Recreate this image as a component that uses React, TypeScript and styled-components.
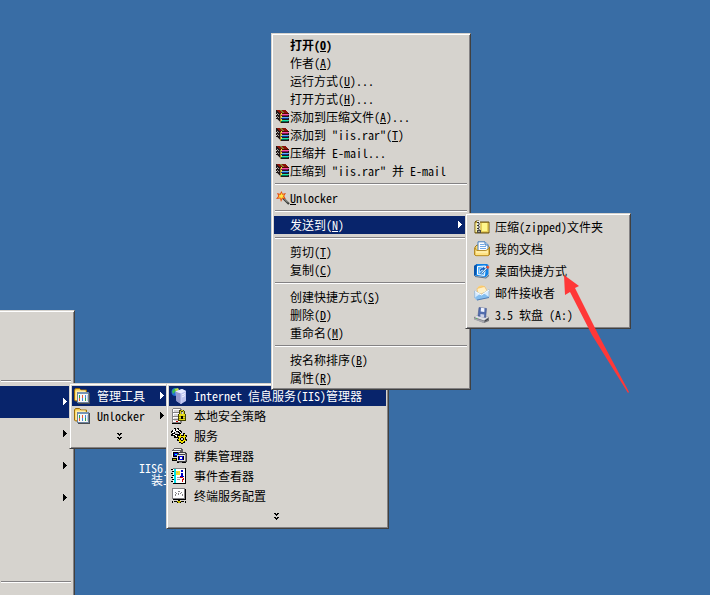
import React from "react";
import styled, { createGlobalStyle, css } from "styled-components";

const face = "#d6d3ce";
const navy = "#08246b";

const GlobalStyle = createGlobalStyle`
  html, body, #root { height: 100%; }
  body { margin: 0; background: #396da5; }
`;

const Desktop = styled.main`
  position: relative;
  min-height: 100%;
  overflow: hidden;
  background: #396da5;
  color: #000;
  font: 12px/18px "Noto Sans CJK SC", "Liberation Sans", sans-serif;
`;

const Menu = styled.ul<{ $x: number; $y: number; $w: number; $z: number }>`
  position: absolute;
  left: ${(p) => p.$x}px;
  top: ${(p) => p.$y}px;
  z-index: ${(p) => p.$z};
  box-sizing: border-box;
  width: ${(p) => p.$w}px;
  margin: 0;
  padding: 2px;
  list-style: none;
  background: ${face};
  border: 1px solid;
  border-color: ${face} #404040 #404040 ${face};
  box-shadow: inset 1px 1px #fff, inset -1px -1px #848284;
`;

const StartMenu = styled(Menu)`
  border-left: 0;
  padding-left: 0;
  box-shadow: inset 0 1px #fff, inset -1px 0 #848284;
`;

type Kind = "context" | "send" | "programs" | "start";

const kinds = {
  context: css`height: 18px; padding: 0 5px 0 2px; --icon: 14px; --gap: 0;`,
  send: css`height: 22px; padding: 0 5px 0 6px; --icon: 16px; --gap: 5px;`,
  programs: css`height: 20px; padding: 0 4px 0 2px; --icon: 16px; --gap: 7px;`,
  start: css`height: 32px; padding: 0 4px 0 0; --icon: 0; --gap: 0;`,
};

const ItemButton = styled.button<{ $kind: Kind; $active?: boolean; $bold?: boolean }>`
  display: flex;
  align-items: center;
  box-sizing: border-box;
  width: 100%;
  margin: 0;
  border: 0;
  font: inherit;
  text-align: left;
  color: ${(p) => (p.$active ? "#fff" : "#000")};
  background: ${(p) => (p.$active ? navy : "transparent")};
  font-weight: ${(p) => (p.$bold ? 700 : 400)};
  ${(p) => kinds[p.$kind]}
`;

const IconSlot = styled.span`
  display: flex;
  flex: none;
  width: var(--icon);
  margin-right: var(--gap);
`;

const Text = styled.span`
  flex: 1;
  white-space: pre;
`;

const Latin = styled.span`
  font-feature-settings: "hwid" 1;
`;

const Hot = styled(Latin)`
  text-decoration: underline;
  text-underline-offset: 1px;
`;

const Separator = styled.li`
  height: 1px;
  margin: 3px 1px 4px;
  background: #848284;
  border-bottom: 1px solid #fff;
`;

const Center = styled.span`
  display: flex;
  flex: 1;
  justify-content: center;
`;

const Shortcut = styled.div`
  position: absolute;
  left: 139px;
  top: 444px;
  display: flex;
  flex-direction: column;
  align-items: flex-start;
  color: #fff;
  line-height: 12px;
`;

const ShortcutPicture = styled.svg`
  align-self: flex-end;
  margin-bottom: 2px;
`;

const SecondLine = styled.span`
  padding-left: 12px;
`;

const Pointer = styled.svg`
  position: absolute;
  left: 562px;
  top: 274px;
  z-index: 9;
  pointer-events: none;
`;

/* "&" marks the access key that follows it. */
function Label({ text }: { text: string }) {
  const parts = text.match(/[\u4e00-\u9fff]+|&.|[^&\u4e00-\u9fff]+/g) || [];
  return (
    <>
      {parts.map((part, i) =>
        part[0] === "&" ? (
          <Hot key={i}>{part[1]}</Hot>
        ) : /[\u4e00-\u9fff]/.test(part) ? (
          <span key={i}>{part}</span>
        ) : (
          <Latin key={i}>{part}</Latin>
        )
      )}
    </>
  );
}

const Arrow = () => (
  <svg width="6" height="8" viewBox="0 0 6 8" shapeRendering="crispEdges" aria-hidden="true">
    <path d="M1 0h1v1h1v1h1v1h1v1h-1v1h-1v1h-1v1H1z" fill="currentColor" />
  </svg>
);

const Chevron = () => (
  <svg width="5" height="8" viewBox="0 0 5 8" shapeRendering="crispEdges" aria-hidden="true">
    <path
      d="M0 1h2v1h1v-1h2v1h-1v1h-1v1h-1v-1h-1v-1H0zM0 5h2v1h1v-1h2v1h-1v1h-1v1h-1v-1h-1v-1H0z"
      fill="#000"
    />
  </svg>
);

const Pixels = ({ size = 16, children }: { size?: number; children: React.ReactNode }) => (
  <svg width={size} height={size} viewBox={`0 0 ${size} ${size}`} shapeRendering="crispEdges" aria-hidden="true">
    {children}
  </svg>
);

const Smooth = ({ children }: { children: React.ReactNode }) => (
  <svg width="16" height="16" viewBox="0 0 16 16" aria-hidden="true">
    {children}
  </svg>
);

const RarIcon = () => (
  <Pixels size={14}>
    <path d="M0 0h10v1h1v1h1v1h1v10H4v-1H3v-1H2v-1H1V9H0V8h1V7H0V5h1V4H0z" fill="#211818" />
    <path d="M1 0h9v1h1v1h1v1H3V2H2V1H1z" fill="#8c1408" />
    <path d="M3 3h9v1H4z" fill="#520800" />
    <path d="M1 3h1v1H1zM2 4h1v1H2zM1 6h1v1H1zM2 7h1v1H2zM1 9h1v1H1zM2 10h1v1H2zM3 11h1v1H3z" fill="#a5a29c" />
    <path d="M5 4h8v1H5z" fill="#f751a5" />
    <path d="M5 5h7v1H5z" fill="#8c1452" />
    <path d="M5 7h8v1H5z" fill="#5ab2f7" />
    <path d="M5 8h7v1H5z" fill="#10389c" />
    <path d="M5 10h8v1H5z" fill="#21e3a5" />
    <path d="M5 11h7v1H5z" fill="#007152" />
    <path d="M4 0h2v1h1v1h1v1H6V2H5V1H4z" fill="#848231" />
    <path d="M4 4h1v9H4z" fill="#a58a29" />
    <path d="M5 3h1v2H5zM5 6h1v2H5zM5 9h1v2H5z" fill="#efdf42" />
  </Pixels>
);

const WandIcon = () => (
  <svg width="14" height="14" viewBox="0 0 14 14" aria-hidden="true">
    <path d="M7 7l6 6" stroke="#393c39" strokeWidth="2.200" />
    <path d="M8 7.500l4 4" stroke="#b5b6ad" />
    <path d="M5.500 0l1.200 2.800L10 2 8.200 5l1.600 3-3.200-.5L5 11 4 7.500 0 8l2.300-3L1 2l3 .8z" fill="#e74d10" />
    <path d="M5.400 1.800l.8 2 2-.4L7 5.200l1 1.700-2-.4-.9 2-.7-2-2.400.3 1.500-1.800-.8-1.500 1.900.4z" fill="#ffe342" />
  </svg>
);

const ProgramFolder = () => (
  <Smooth>
    <path d="M.5 2l1-1.500h4L7 2h5.500v3H5v8H1.500l-1-1z" fill="#f7ca42" stroke="#9c6d08" />
    <path d="M1.500 2.500h10V4h-7v8H1.500z" fill="#ffeda5" />
    <path d="M4 5h12v11H4z" fill="#4a4d52" />
    <path d="M3 4h12v11H3z" fill="#6b829c" />
    <path d="M4 6h10v8H4z" fill="#f7f7f7" />
    <path d="M4 4.500h10v1H4z" fill="#84a6ce" />
    <path d="M5 7h1v3H5zM11 10h1v3h-1z" fill="#29a64a" />
    <path d="M8 7h1v3H8zM5 10h1v3H5z" fill="#e75931" />
    <path d="M11 7h1v3h-1zM8 10h1v3H8z" fill="#3986de" />
    <path d="M13 7h1v6h-1z" fill="#c6cbd6" />
  </Smooth>
);

const ZipIcon = () => (
  <Smooth>
    <path d="M1 3l1-1h3l1 1h9v11H1z" fill="#c6a642" stroke="#6b5510" />
    <path d="M1.500 4h5v9h-5z" fill="#f7ef9c" />
    <path d="M7 4h7.500v9H7z" fill="#e7cf5a" />
    <path d="M8 4h5v8H8z" fill="#fff78c" />
    <path d="M3 2h3v12H3z" fill="#e7e7e7" />
    <path d="M3 3.500h2M4 5h2M3 6.500h2M4 8h2M3 9.500h2M4 11h2" stroke="#31302a" />
    <path d="M3 11h4v3H3z" fill="#4a4942" />
    <path d="M4.500 12h1v1h-1z" fill="#fff" />
  </Smooth>
);

const DocumentsIcon = () => (
  <Smooth>
    <path d="M1 6l2-2h10l2.500 2v7.500l-1.500 1H2l-1.500-1z" fill="#f7d773" stroke="#a57918" />
    <path d="M4 .8h7l3 3V10H4z" fill="#fff" stroke="#427dbd" />
    <path d="M11 1v3h3" fill="#c6dff7" stroke="#427dbd" />
    <path d="M6 3.500h4M6 5.500h6M6 7.500h6" stroke="#73aae7" />
    <path d="M.8 7l2 2.500h9L15 7.500V14l-1.500.7H2L.8 14z" fill="#ffe384" stroke="#ad7d10" strokeWidth=".8" />
    <path d="M2 11h12" stroke="#fff7c6" />
  </Smooth>
);

const DesktopIcon = () => (
  <Smooth>
    <path d="M3 1h10l1.500 1v9L12 14l-9-1L0 12V3z" fill="#1082e7" />
    <path d="M0 3l3-2-1 11-2 1z" fill="#0855ad" />
    <path d="M1 13l11 1.500 3-3V13l-3 2.500L1 14z" fill="#5a718c" />
    <path d="M3.500 3.500l8-.5-1 9.500-7-1z" fill="#5ab6ff" stroke="#fff" />
    <path d="M5.500 9.500V7q.5-2.500 3.500-2.500V3L12 6 9 8.500V7Q7 7 5.500 9.500z" fill="#1061c6" stroke="#fff" strokeWidth=".6" />
    <path d="M6.500 10.500l5.500-6L13.500 5.500 8 11z" fill="#d6efff" stroke="#104a94" strokeWidth=".6" />
    <path d="M12 4l1.500-1.500L15.500 4 14 6z" fill="#f75129" />
  </Smooth>
);

const MailIcon = () => (
  <Smooth>
    <circle cx="7.500" cy="4.500" r="4" fill="#ffcf73" />
    <path d="M3 3.500l7.500-2 3 5L4 10z" fill="#fff0c6" stroke="#efb652" strokeWidth=".6" />
    <path d="M.7 6L7.500 9.500 15 4.500v7.500L3 15 .7 13z" fill="#d6ebff" stroke="#84aed6" strokeWidth=".7" />
    <path d="M1 12.500L6 9l1.500 1 2.500-1.500 5 3.500L3 15z" fill="#84beef" />
    <path d="M1 6.500l6.500 3.500L15 5" fill="none" stroke="#fff" />
    <path d="M3 15l12-2.500" stroke="#527db5" />
  </Smooth>
);

const FloppyIcon = () => (
  <Smooth>
    <path d="M0 10l4-2 11 2v4l-5 2-10-4z" fill="#73757b" />
    <path d="M0 10l4-2 11 2-5 3.500z" fill="#dedfe3" />
    <path d="M0 11l10 3v2L0 12.500z" fill="#a5a6ad" />
    <path d="M5 .5l7.500 1-.8 9-7.700-1.500z" fill="#526dad" stroke="#394a84" strokeWidth=".5" />
    <path d="M7 .8l3.500.5L10.300 5 6.700 4.500z" fill="#eff3ff" />
    <path d="M6.500 7l3.700.6-.2 3-3.700-.8z" fill="#ced3e7" />
    <path d="M11 14l3-2" stroke="#393c42" />
    <path d="M2 11.500h1" stroke="#52c752" />
  </Smooth>
);

const IisIcon = () => (
  <Smooth>
    <circle cx="4.500" cy="4" r="4" fill="#2170d6" />
    <path d="M1 3l3-3 2 2-2 2-2 2z" fill="#39be52" />
    <path d="M4 1l3-1 1 2-3 2z" fill="#c6db42" />
    <path d="M4.500 3.500L11 1l4 2v10l-5 3-4.500-3z" fill="#bdc3ef" />
    <path d="M4.500 3.500l5.500 2V16l-4.500-3z" fill="#949ace" />
    <path d="M4.500 3.500L11 1l4 2-5 2.500z" fill="#e7ebff" />
    <path d="M11 7l3-1.500M11 9l3-1.500" stroke="#f7f7ff" />
    <path d="M10 5.500V16" stroke="#d6dbff" strokeWidth=".7" />
  </Smooth>
);

const SecurityIcon = () => (
  <Pixels>
    <path d="M2 0h8v1h1v14H1V1h1z" fill="#848284" />
    <path d="M2 1h7v13H2z" fill="#fff" />
    <path d="M3 2h6v2H3zM3 6h6v2H3zM3 10h6v3H3z" fill="#d6d3d6" />
    <path d="M2 4h7v1H2zM2 8h6v1H2zM2 11h6v1H2z" fill="#848284" />
    <path d="M5 13h2v1H5z" fill="#ce0000" />
    <path d="M1 15h9v1H1z" fill="#000" />
    <path d="M8 2h5v1h1v4h-2V4h-2v3H8V3H7h1z" fill="#424100" />
    <path d="M9 3h1v4H9zM12 3h1v4h-1zM10 2h2v1h-2z" fill="#d6cf21" />
    <path d="M7 6h8v7H7z" fill="#424100" />
    <path d="M8 6h6v6H8z" fill="#e7db18" />
    <path d="M8 8h6v1H8zM8 10h6v1H8z" fill="#a59e10" />
    <path d="M10 8h2v3h-2z" fill="#000" />
  </Pixels>
);

const ServicesIcon = () => (
  <Pixels>
    <path d="M3 0h2v2H3zM6 0h2v2H6zM1 2h9v6H1zM0 3h2v2H0zM9 3h2v2H9zM0 6h2v2H0zM3 8h5v2H3z" fill="#000" />
    <path d="M3 1h1v1H3zM6 1h1v1H6zM2 2h2v2H2zM5 2h2v1H5zM8 3h1v1H8zM1 4h2v1H1zM2 6h2v1H2zM4 7h2v1H4zM7 5h2v1H7zM4 3h1v1H4zM7 2h1v1H7zM5 8h1v1H5zM9 4h1v1H9z" fill="#fff" />
    <path d="M4 4h3v2H4z" fill="#c6c3c6" />
    <path d="M8 5h2v2h2V5h2v2h2v2h-1v2h1v2h-2v2h-2v1h-2v-1H8v-2H6v-2h1V9H6V7h2z" fill="#000" />
    <path d="M9 6h1v2h3V6h1v2h1v1h-1v3h1v1h-2v1h-1v1h-2v-1H8v-2H7v-1h1V9H7V8h2z" fill="#efdf00" />
    <path d="M10 9h2v1h1v2h-1v1h-2v-1H9v-2h1z" fill="#000" />
    <path d="M10 10h2v2h-2z" fill="#d6d3ce" />
  </Pixels>
);

const ClusterIcon = () => (
  <Pixels>
    <path d="M3 0h8v1h1v8H1V2h1V1h1z" fill="#636163" />
    <path d="M3 1h7v1H3zM1 3h8v6H1z" fill="#f7f7f7" />
    <path d="M2 4h6v5H2z" fill="#000" />
    <path d="M3 5h4v3H3z" fill="#0000de" />
    <path d="M4 6h2v1H4z" fill="#00ffff" />
    <path d="M1 10h5v3H1z" fill="#000" />
    <path d="M2 11h3v1H2z" fill="#ada600" />
    <path d="M7 4h8v1h1v9H6V6h1z" fill="#424142" />
    <path d="M8 5h6v1H8zM6 7h8v6H6z" fill="#e7e7e7" />
    <path d="M14 6h1v7h-1z" fill="#848284" />
    <path d="M7 8h6v4H7z" fill="#000" />
    <path d="M8 8h4v4H8z" fill="#0000de" />
    <path d="M9 9h2v2H9z" fill="#fff" />
    <path d="M6 14h9v1H6z" fill="#000" />
    <path d="M8 14h3v1H8z" fill="#848284" />
  </Pixels>
);

const EventIcon = () => (
  <Pixels>
    <path d="M2 0h13v16H2z" fill="#000" />
    <path d="M2 1h12v14H2z" fill="#fff" />
    <path d="M3 1h2v14H3z" fill="#00dfe7" />
    <path d="M2 0h12v1H2z" fill="#848284" />
    <path d="M0 1h2v1H0zM1 3h2v1H1zM0 5h2v1H0zM1 7h2v1H1zM0 9h2v1H0zM1 11h2v1H1zM0 13h2v1H0z" fill="#000" />
    <path d="M5 3h4v4H5z" fill="#f7df29" />
    <path d="M6 4h1v1H6zM6 9h3v1H6zM6 11h3v1H6z" fill="#a5a2a5" />
    <path d="M10 2h2v2h-2zM10 5h2v3h1v1H9V8h1z" fill="#0000c6" />
    <path d="M9 9h3v1h1v2h-1v1h-1v-2h1v-1H9zM11 13h1v1h-1z" fill="#ce0000" />
  </Pixels>
);

const TerminalIcon = () => (
  <Pixels>
    <path d="M1 0h13v11H1z" fill="#848284" />
    <path d="M2 1h11v9H2z" fill="#fff" />
    <path d="M14 1h1v11H2v-1h12z" fill="#000" />
    <path d="M4 4h1v1H4zM7 3h2v1H7zM10 4h1v1h-1zM5 5h1v1H5zM9 5h1v1H9zM4 6h1v2H4zM7 5h1v2H7zM11 6h1v2h-1z" fill="#848284" />
    <path d="M7 12h2v1H7zM0 13h15v2H0z" fill="#000" />
    <path d="M0 13h1v2H0zM2 13h1v2H2zM13 13h1v2h-1zM3 14h3v1H3zM10 14h3v1h-3z" fill="#d6d3ce" />
    <path d="M6 13h4v1H6zM7 14h2v1H7z" fill="#c6ba00" />
  </Pixels>
);

type Entry = {
  text?: string;
  icon?: React.ReactNode;
  sub?: boolean;
  active?: boolean;
  bold?: boolean;
  more?: boolean;
};

function Items({ kind, entries }: { kind: Kind; entries: (Entry | "-")[] }) {
  return (
    <>
      {entries.map((e, i) =>
        e === "-" ? (
          <Separator key={i} role="separator" />
        ) : (
          <li key={i} role="none">
            <ItemButton
              type="button"
              role="menuitem"
              aria-haspopup={e.sub ? "menu" : undefined}
              $kind={kind}
              $active={e.active}
              $bold={e.bold}
            >
              {e.more ? (
                <Center>
                  <Chevron />
                </Center>
              ) : (
                <>
                  <IconSlot>{e.icon}</IconSlot>
                  <Text>{e.text && <Label text={e.text} />}</Text>
                  {e.sub && <Arrow />}
                </>
              )}
            </ItemButton>
          </li>
        )
      )}
    </>
  );
}

const rar = <RarIcon />;

const contextEntries: (Entry | "-")[] = [
  { text: "打开(&O)", bold: true },
  { text: "作者(&A)" },
  { text: "运行方式(&U)..." },
  { text: "打开方式(&H)..." },
  { text: "添加到压缩文件(&A)...", icon: rar },
  { text: '添加到 "iis.rar"(&T)', icon: rar },
  { text: "压缩并 E-mail...", icon: rar },
  { text: '压缩到 "iis.rar" 并 E-mail', icon: rar },
  "-",
  { text: "&Unlocker", icon: <WandIcon /> },
  "-",
  { text: "发送到(&N)", active: true, sub: true },
  "-",
  { text: "剪切(&T)" },
  { text: "复制(&C)" },
  "-",
  { text: "创建快捷方式(&S)" },
  { text: "删除(&D)" },
  { text: "重命名(&M)" },
  "-",
  { text: "按名称排序(&B)" },
  { text: "属性(&R)" },
];

const sendEntries: Entry[] = [
  { text: "压缩(zipped)文件夹", icon: <ZipIcon /> },
  { text: "我的文档", icon: <DocumentsIcon /> },
  { text: "桌面快捷方式", icon: <DesktopIcon /> },
  { text: "邮件接收者", icon: <MailIcon /> },
  { text: "3.5 软盘 (A:)", icon: <FloppyIcon /> },
];

const programEntries: Entry[] = [
  { text: "管理工具", icon: <ProgramFolder />, sub: true, active: true },
  { text: "Unlocker", icon: <ProgramFolder />, sub: true },
  { more: true },
];

const adminEntries: Entry[] = [
  { text: "Internet 信息服务(IIS)管理器", icon: <IisIcon />, active: true },
  { text: "本地安全策略", icon: <SecurityIcon /> },
  { text: "服务", icon: <ServicesIcon /> },
  { text: "群集管理器", icon: <ClusterIcon /> },
  { text: "事件查看器", icon: <EventIcon /> },
  { text: "终端服务配置", icon: <TerminalIcon /> },
  { more: true },
];

const startEntries: (Entry | "-")[] = [
  {},
  {},
  "-",
  { sub: true, active: true },
  { sub: true },
  { sub: true },
  { sub: true },
  {},
  {},
  "-",
  {},
];

export default function App() {
  return (
    <>
      <GlobalStyle />
      <Desktop>
        <Shortcut>
          <ShortcutPicture width="5" height="16" viewBox="0 0 5 16" aria-hidden="true">
            <path d="M1 5h4v4H1z" fill="#e79a18" />
            <path d="M2 6h3v2H2z" fill="#ffd763" />
          </ShortcutPicture>
          <span>
            <Label text="IIS6." />
          </span>
          <SecondLine>装工</SecondLine>
        </Shortcut>
        <StartMenu role="menu" aria-label="开始" $x={0} $y={310} $w={75} $z={1}>
          <Items kind="start" entries={startEntries} />
        </StartMenu>
        <Menu role="menu" aria-label="程序" $x={69} $y={383} $w={103} $z={2}>
          <Items kind="programs" entries={programEntries} />
        </Menu>
        <Menu role="menu" aria-label="管理工具" $x={166} $y={383} $w={223} $z={3}>
          <Items kind="programs" entries={adminEntries} />
        </Menu>
        <Menu role="menu" aria-label="文件" $x={271} $y={33} $w={200} $z={4}>
          <Items kind="context" entries={contextEntries} />
        </Menu>
        <Menu role="menu" aria-label="发送到" $x={465} $y={213} $w={166} $z={5}>
          <Items kind="send" entries={sendEntries} />
        </Menu>
        <Pointer width="70" height="122" viewBox="0 0 70 122" aria-hidden="true">
          <path d="M2 1l15 11-4 2 23 46 31 58-1 1-36-58L8 18l-5 3z" fill="#ff3838" />
        </Pointer>
      </Desktop>
    </>
  );
}
